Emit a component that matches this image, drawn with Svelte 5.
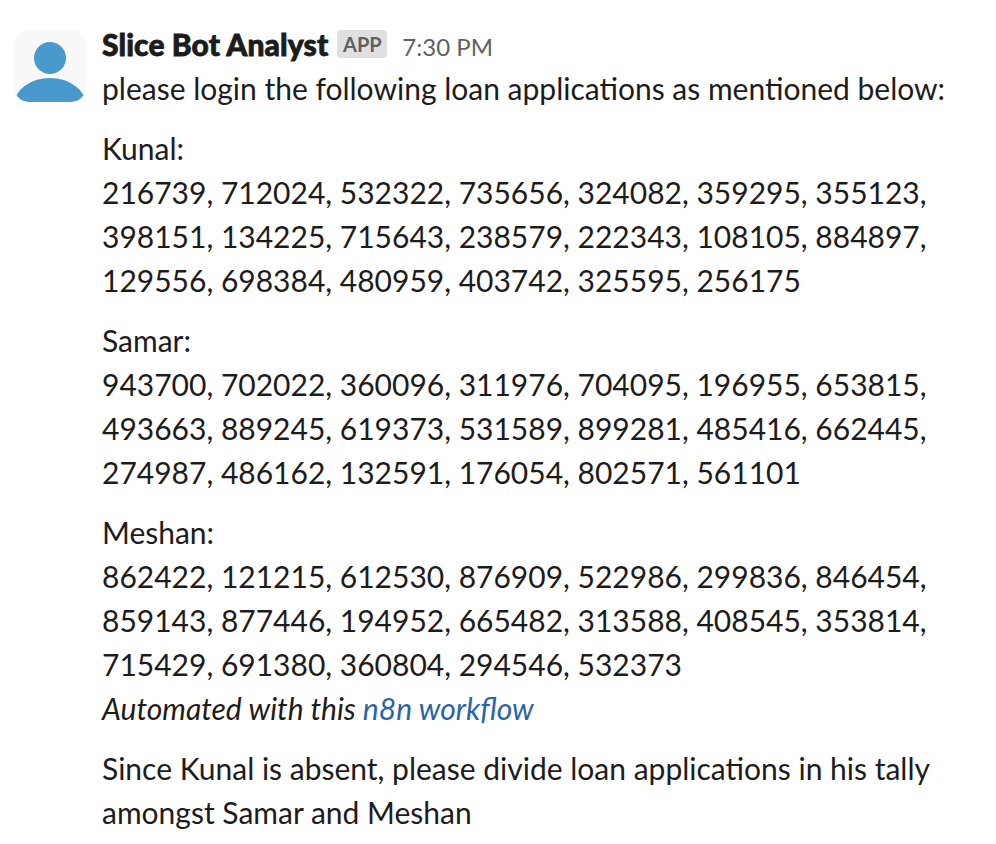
<script>
  const groups = [
    { name: 'Kunal', rows: ['216739, 712024, 532322, 735656, 324082, 359295, 355123,', '398151, 134225, 715643, 238579, 222343, 108105, 884897,', '129556, 698384, 480959, 403742, 325595, 256175'] },
    { name: 'Samar', rows: ['943700, 702022, 360096, 311976, 704095, 196955, 653815,', '493663, 889245, 619373, 531589, 899281, 485416, 662445,', '274987, 486162, 132591, 176054, 802571, 561101'] },
    { name: 'Meshan', rows: ['862422, 121215, 612530, 876909, 522986, 299836, 846454,', '859143, 877446, 194952, 665482, 313588, 408545, 353814,', '715429, 691380, 360804, 294546, 532373'] }
  ];
</script>

<article class="message">
  <svg class="avatar" viewBox="0 0 72 72" aria-hidden="true">
    <clipPath id="tile"><rect width="72" height="72" rx="15" /></clipPath>
    <g clip-path="url(#tile)">
      <rect width="72" height="72" fill="#f8f8f8" />
      <circle cx="36" cy="28" r="16" fill="#4999cd" />
      <ellipse cx="36" cy="75" rx="36" ry="27" fill="#4999cd" />
    </g>
  </svg>
  <div class="content">
    <header>
      <span class="sender">Slice Bot Analyst</span>
      <span class="badge">APP</span>
      <time>7:30 PM</time>
    </header>
    <p>please login the following loan applications as mentioned below:</p>
    {#each groups as group}
      <section>
        <p>{group.name}:</p>
        {#each group.rows as row}<p>{row}</p>{/each}
      </section>
    {/each}
    <p class="auto">Automated with this <a href="#workflow">n8n workflow</a></p>
    <section>
      <p>Since Kunal is absent, please divide loan applications in his tally</p>
      <p>amongst Samar and Meshan</p>
    </section>
  </div>
</article>

<style>
  :global(body) { background: #fff; }
  .message { box-sizing: border-box; width: 996px; height: 844px; padding: 22px 14px 0; display: flex; gap: 16px; color: #1d1c1d; font: 30px/44px Lato, sans-serif; overflow: hidden; }
  .avatar { width: 72px; height: 72px; margin-top: 8px; flex: none; }
  .content { white-space: nowrap; }
  header { display: flex; height: 44px; align-items: flex-start; }
  .sender { font-weight: 900; letter-spacing: 0.1px; -webkit-text-stroke: 0.8px #1d1c1d; }
  .badge { box-sizing: border-box; width: 50px; margin: 8px 0 0 9px; height: 28px; border-radius: 4px; background: #e0e0e0; color: #616061; font-size: 20px; font-weight: 700; line-height: 29px; text-align: center; }
  time { margin: 3px 0 0 15px; color: #616061; font-size: 24px; }
  p { margin: 0; }
  section { margin-top: 16px; }
  .auto { font-style: italic; }
  a { color: #2a64a5; text-decoration: none; }
</style>
